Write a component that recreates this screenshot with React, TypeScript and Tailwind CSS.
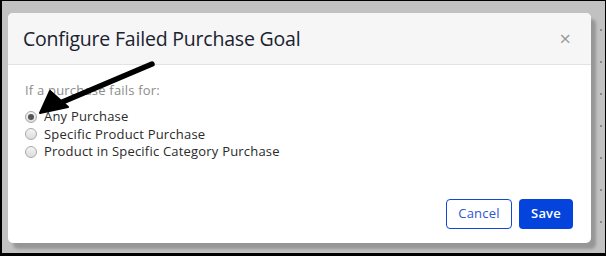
import React from "react";

const options = ["Any Purchase", "Specific Product Purchase", "Product in Specific Category Purchase"];

function Radio({ checked }: { checked?: boolean }) {
  return (
    <span className="w-[12px] h-[12px] rounded-full border border-[#a9a9a9] bg-gradient-to-b from-[#f4f4f4] to-[#dcdcdc] flex items-center justify-center shrink-0">
      {checked && <span className="w-[6px] h-[6px] rounded-full bg-[#555]" />}
    </span>
  );
}

export default function App() {
  return (
    <div className="w-[606px] h-[256px] bg-[#c1c1c1] border-t border-l-2 border-r border-b-[3px] border-black relative overflow-hidden pt-[12px] pl-[6px] font-['Open_Sans',sans-serif]">
      {/* page dots on right edge */}
      <div className="absolute right-[3px] top-[28px] flex flex-col gap-[30px]">
        <span className="w-[2px] h-[2px] bg-[#8a8a8a]" />
        <span className="w-[2px] h-[2px] bg-[#8a8a8a]" />
        <span className="w-[2px] h-[2px] bg-[#8a8a8a]" />
        <span className="w-[2px] h-[2px] bg-[#8a8a8a]" />
        <span className="w-[2px] h-[2px] bg-[#8a8a8a]" />
        <span className="w-[2px] h-[2px] bg-[#8a8a8a]" />
        <span className="w-[2px] h-[2px] bg-[#8a8a8a]" />
      </div>

      <div className="w-[583px] h-[230px] bg-white rounded-[5px] shadow-[5px_6px_3px_rgba(0,0,0,0.22)] flex flex-col overflow-hidden">
        <div className="h-[52px] bg-[#f6f6f6] border-b border-[#e3e3e3] flex items-center justify-between pl-[15px] pr-[20px] shrink-0">
          <h1 className="text-[19.5px] text-[#1b2230] tracking-[-0.2px] pt-[1px]">Configure Failed Purchase Goal</h1>
          <span className="text-[#9a9a9a] text-[20px] leading-none">×</span>
        </div>

        <div className="flex-1 pl-[17px] pt-[17px]">
          <p className="text-[13px] tracking-[0.2px] text-[#8c8c8c] leading-[17px] mb-[9px]">If a purchase fails for:</p>
          <div className="flex flex-col">
            {options.map((o, i) => (
              <label key={o} className="flex items-center gap-[7px] h-[17.5px] text-[13px] tracking-[0.2px] text-[#2a2a2a]">
                <Radio checked={i === 0} />
                <span>{o}</span>
              </label>
            ))}
          </div>
        </div>

        <div className="flex justify-end gap-[7px] pr-[18px] pb-[14px]">
          <button className="w-[66px] h-[30px] rounded-[4px] border border-[#1148d4] text-[#2f55d4] text-[13px] tracking-[0.2px]">Cancel</button>
          <button className="w-[54px] h-[30px] rounded-[4px] bg-[#0443dc] text-white text-[13px] font-semibold tracking-[0.2px]">Save</button>
        </div>
      </div>

      {/* annotation arrow */}
      <svg className="absolute left-0 top-0 pointer-events-none" width="606" height="256" viewBox="0 0 606 256">
        <line x1="150" y1="63" x2="58" y2="102" stroke="#000" strokeWidth="5.5" strokeLinecap="round" />
        <polygon points="38,112 48,90 66,106" fill="#000" stroke="#000" strokeWidth="2" strokeLinejoin="round" />
      </svg>
    </div>
  );
}
